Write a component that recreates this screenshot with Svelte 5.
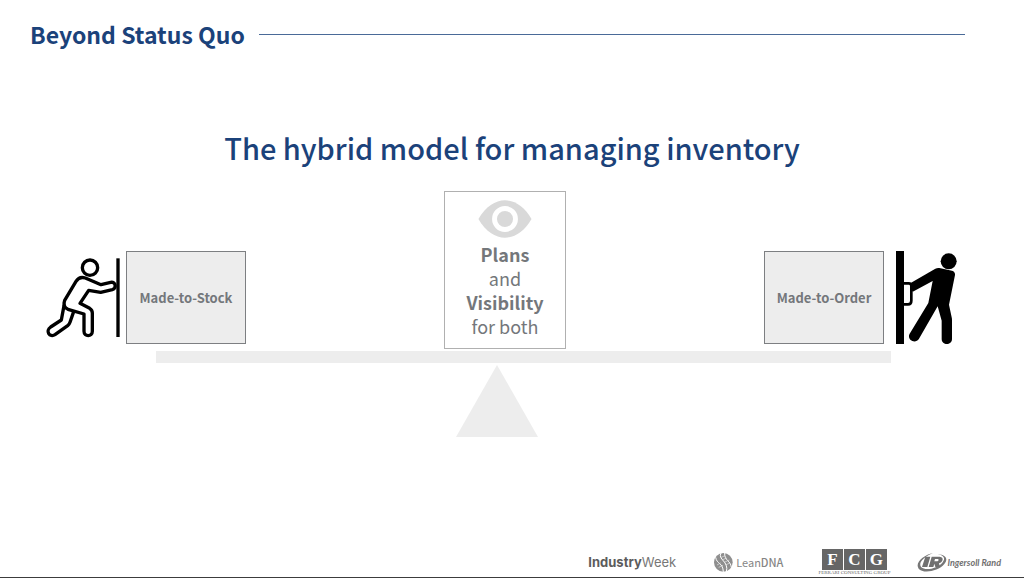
<script lang="ts">
  // Lines of the centre card, strong ones are set in bold
  const cardLines = [
    { text: 'Plans', strong: true },
    { text: 'and', strong: false },
    { text: 'Visibility', strong: true },
    { text: 'for both', strong: false }
  ];

  const fcgLetters = ['F', 'C', 'G'];
</script>

<div class="slide">
  <header>
    <h1>Beyond Status Quo</h1>
    <div class="rule"></div>
  </header>

  <main>
    <h2>The hybrid model for managing inventory</h2>

    <div class="load">
      <div class="side">
        <!-- Person pushing -->
        <svg class="push" viewBox="48 33 222 279" aria-hidden="true">
          <g fill="none" stroke="#000" stroke-width="10" stroke-linejoin="round" stroke-linecap="round">
            <circle cx="180" cy="83" r="23" />
            <path d="M166 114 L213 134 L242 127 C258 124 260 145 247 149 L212 157 L176 151 L150 190 L179 205 Q187 210 187 219 V274 C187 291 162 291 162 274 V222 L114 208 Q97 200 104 181 L138 124 Q148 108 166 114 Z" />
            <path d="M102 197 L94 240 L62 261 C45 273 59 294 75 284 L113 257 Q118 253 120 247 L131 215" />
          </g>
          <rect x="259" y="55" width="10" height="236" />
        </svg>
        <div class="box">Made-to-Stock</div>
      </div>

      <div class="card">
        <svg class="eye" viewBox="0 0 162 116" aria-hidden="true">
          <path d="M0 58 C44 -18 118 -18 162 58 C118 134 44 134 0 58 Z" fill="#d9d9d9" />
          <circle cx="81" cy="58" r="32" fill="#d9d9d9" stroke="#fff" stroke-width="15" />
        </svg>
        {#each cardLines as line}
          <p class:strong={line.strong}>{line.text}</p>
        {/each}
      </div>

      <div class="side">
        <div class="box">Made-to-Order</div>
        <!-- Person pulling -->
        <svg class="pull" viewBox="438 33 183 279" aria-hidden="true">
          <rect x="438" y="33" width="24" height="279" />
          <path d="M462 130 H476 Q484 130 484 138 V182 Q484 193 474 193 H462" fill="none" stroke="#000" stroke-width="8" />
          <circle cx="596" cy="64" r="24" />
          <path d="M482 129 L556 86 Q562 83 568 84 L606 92 Q616 95 615 105 L597 194 L605 232 Q606 236 606 240 V297 C606 317 575 317 575 297 V242 L563 199 L507 296 C496 314 469 299 479 281 L535 189 L548 123 L491 154 Q484 157 484 145 Z" />
        </svg>
      </div>
    </div>

    <div class="beam"></div>
    <svg class="pivot" viewBox="0 0 82 72" aria-hidden="true">
      <path d="M41 0 L82 72 H0 Z" fill="#ededed" />
    </svg>
  </main>

  <footer>
    <div class="industry"><b>Industry</b>Week</div>

    <div class="lean">
      <svg viewBox="0 0 57 57" aria-hidden="true">
        <circle cx="28" cy="28" r="28" fill="#8e8e8e" />
        <g fill="none" stroke="#fff" stroke-width="3">
          <path d="M21 0 C10 20 46 24 37 57" />
          <path d="M5 13 C8 34 27 28 28 57" />
          <path d="M32 0 C31 24 50 22 52 43" />
        </g>
        <g fill="none" stroke="#e6e6e6" stroke-width="2">
          <path d="M20 14 L33 8 M24 21 L38 15 M31 28 L46 21 M9 36 L20 30 M14 43 L27 37 M34 36 L48 30" />
        </g>
      </svg>
      <span>Lean<b>DNA</b></span>
    </div>

    <div class="fcg">
      <div class="tiles">
        {#each fcgLetters as letter}
          <span>{letter}</span>
        {/each}
      </div>
      <small>FERRARI CONSULTING GROUP</small>
    </div>

    <div class="ingersoll">
      <svg viewBox="0 0 90 60" aria-hidden="true">
        <path d="M62 6 C88 8 94 22 82 36 C64 58 18 66 5 50 C-8 32 22 8 48 4 C20 14 2 34 13 46 C26 58 64 48 76 32 C86 20 82 10 62 6 Z" fill="#777" />
        <path d="M25 14 H40 L31 45 H15 Z M44 14 H68 Q80 15 76 26 Q73 33 66 34 L69 45 H55 L52 35 L49 45 H35 Z" fill="#707070" />
        <path d="M54 21 H63 Q66 22 64 26 Q62 28 58 28 H52 Z" fill="#fff" />
      </svg>
      <span>Ingersoll Rand</span>
    </div>
  </footer>
</div>

<style>
  :global(body) {
    margin: 0;
    background: #fff;
  }

  .slide {
    display: flex;
    flex-direction: column;
    box-sizing: border-box;
    min-height: 100vh;
    border-bottom: 1px solid #3c3c3c;
    color: #74777b;
    font-family: 'Noto Sans CJK SC', 'Open Sans', sans-serif;
  }

  h1,
  h2,
  p {
    margin: 0;
  }

  header {
    display: flex;
    align-items: center;
    gap: 14px;
    padding: 17px 59px 0 30px;
  }

  h1 {
    color: #1b427a;
    font-size: 23px;
    font-weight: 700;
    line-height: 34px;
  }

  .rule {
    flex: 1;
    height: 1px;
    background: #4a6a98;
  }

  main {
    flex: 1;
    padding-top: 76px;
  }

  h2 {
    color: #1b427a;
    font-size: 29px;
    font-weight: 500;
    line-height: 40px;
    text-align: center;
  }

  /* Everything that rests on the beam */
  .load {
    display: flex;
    justify-content: space-between;
    align-items: flex-end;
    margin-top: 24px;
    padding: 0 67px 0 46px;
  }

  .side {
    display: flex;
    padding-bottom: 5px;
  }

  .box {
    display: flex;
    align-items: center;
    justify-content: center;
    box-sizing: border-box;
    width: 120px;
    height: 93px;
    border: 1px solid #7d7f82;
    background: #ededed;
    font-size: 13px;
    font-weight: 700;
  }

  .push {
    width: 74px;
    height: 93px;
    margin-right: 6px;
  }

  .pull {
    width: 61px;
    height: 93px;
    margin-left: 12px;
  }

  .card {
    box-sizing: border-box;
    width: 122px;
    padding: 8px 0 10px;
    border: 1px solid #b0b0b0;
    font-size: 18px;
    line-height: 24px;
    text-align: center;
  }

  .card .strong {
    font-weight: 700;
  }

  .eye {
    display: block;
    width: 54px;
    height: 38px;
    margin: 0 auto 4px;
  }

  .beam {
    height: 12px;
    margin: 2px 133px 2px 156px;
    background: #ededed;
  }

  .pivot {
    display: block;
    width: 82px;
    height: 72px;
    margin: 0 auto;
    padding-right: 30px;
  }

  footer {
    display: flex;
    justify-content: flex-end;
    align-items: center;
    gap: 30px;
    height: 30px;
    padding-right: 23px;
    white-space: nowrap;
  }

  .industry {
    margin-right: 8px;
    color: #777;
    font-family: Inter, sans-serif;
    font-size: 13px;
  }

  .industry b {
    color: #5c5c5c;
  }

  .lean {
    display: flex;
    align-items: center;
    gap: 3px;
    margin-right: 8px;
    color: #858585;
    font-size: 11px;
  }

  .lean svg {
    width: 19px;
    height: 19px;
  }

  .lean b {
    font-weight: 500;
  }

  .fcg {
    display: flex;
    flex-direction: column;
    align-items: center;
    width: 66px;
    color: #666;
    font-family: 'Liberation Serif', serif;
  }

  .tiles {
    display: flex;
    gap: 1px;
  }

  .tiles span {
    width: 21px;
    background: #666;
    color: #fff;
    font-size: 17px;
    font-weight: 700;
    line-height: 21px;
    text-align: center;
  }

  .fcg small {
    font-size: 5px;
    line-height: 6px;
  }

  .ingersoll {
    display: flex;
    align-items: center;
    color: #707070;
    font-family: Lato, sans-serif;
    font-size: 9px;
    font-style: italic;
    font-weight: 700;
  }

  .ingersoll svg {
    width: 30px;
    height: 20px;
  }
</style>
